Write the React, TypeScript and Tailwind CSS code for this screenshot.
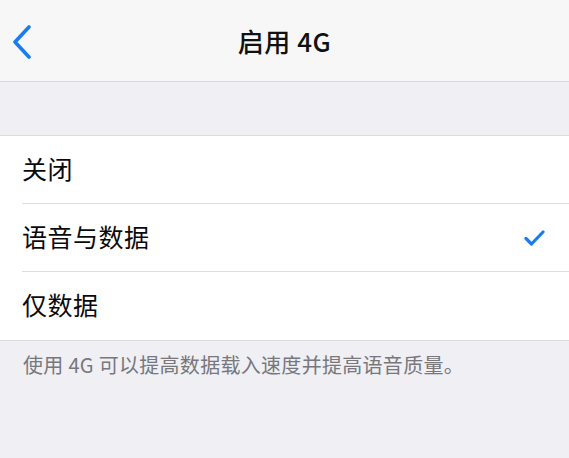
const Chevron = () => (
  <svg width="20" height="34" viewBox="0 0 20 34" fill="none">
    <path
      d="M17 2L3 17L17 32"
      stroke="#1a7cf0"
      strokeWidth="3.6"
      strokeLinecap="round"
      strokeLinejoin="round"
    />
  </svg>
);

const Check = () => (
  <svg width="21" height="16" viewBox="0 0 21 16" fill="none">
    <path
      d="M2 8.5L7.5 14L19 2"
      stroke="#1a7cf0"
      strokeWidth="3.2"
      strokeLinecap="round"
      strokeLinejoin="round"
    />
  </svg>
);

const options = [
  { label: "关闭", checked: false },
  { label: "语音与数据", checked: true },
  { label: "仅数据", checked: false },
];

export default function App() {
  return (
    <div
      className="w-[569px] h-[458px] overflow-hidden bg-[#efeff4] flex flex-col"
      style={{ fontFamily: '"Noto Sans CJK SC", "Noto Sans", sans-serif' }}
    >
      {/* Nav bar */}
      <header className="h-[82px] shrink-0 bg-[#f7f7f8] border-b border-[#d9d9dd] grid grid-cols-[1fr_auto_1fr] items-center">
        <div className="pl-[12px] pt-[2px] flex items-center">
          <Chevron />
        </div>
        <h1 className="text-[26px] font-medium text-[#111] tracking-[0.5px]">启用 4G</h1>
        <div />
      </header>

      {/* Spacer */}
      <div className="h-[53px] shrink-0" />

      {/* Options */}
      <ul className="bg-white border-y border-[#dcdce0]">
        {options.map((opt, i) => (
          <li key={opt.label} className="pl-[22px]">
            <div
              className={`h-[68px] flex items-center justify-between pr-[24px] ${
                i < options.length - 1 ? "border-b border-[#dedee2]" : ""
              }`}
            >
              <span className="text-[25px] text-[#0a0a0a] tracking-[0.5px] -translate-y-[1px]">
                {opt.label}
              </span>
              {opt.checked && <Check />}
            </div>
          </li>
        ))}
      </ul>

      {/* Footer note */}
      <p className="pl-[23px] pt-[9px] text-[20px] leading-[30px] text-[#77777c] tracking-[0.3px]">
        使用 4G 可以提高数据载入速度并提高语音质量。
      </p>
    </div>
  );
}
